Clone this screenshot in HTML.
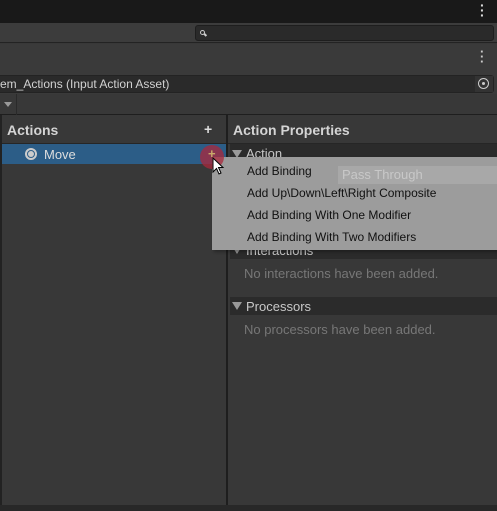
<!DOCTYPE html><html><head><style>
body{margin:0;width:497px;height:511px;background:#383838;font-family:"Liberation Sans",sans-serif;position:relative;overflow:hidden;color:#c4c4c4}
div{position:absolute;box-sizing:border-box}
.t{white-space:nowrap;font-size:12px}
.tri{width:0;height:0;border-left:5px solid transparent;border-right:5px solid transparent;border-top:8px solid #999}
</style></head><body>
<div style="left:0;top:0;width:497px;height:23px;background:#191919"></div>
<div class="t" style="left:480px;top:3px;color:#ddd;font-size:14px;font-weight:bold;line-height:5px;width:6px">·<br>·<br>·</div>
<div style="left:0;top:23px;width:497px;height:20px;background:#3c3c3c;border-bottom:1px solid #232323"></div>
<div style="left:195px;top:25px;width:299px;height:16px;background:#2a2a2a;border:1px solid #1e1e1e;border-radius:3px"></div>
<div style="left:200px;top:30px;width:5px;height:5px;border:1.5px solid #ccc;border-radius:50%"></div>
<div style="left:204px;top:34px;width:3px;height:1.5px;background:#ccc;transform:rotate(45deg)"></div>
<div style="left:0;top:44px;width:497px;height:50px;background:#3a3a3a"></div>
<div class="t" style="left:480px;top:49px;color:#ccc;font-size:13px;font-weight:bold;line-height:5px">·<br>·<br>·</div>
<div style="left:-4px;top:75px;width:498px;height:18px;background:#2a2a2a;border:1px solid #232323;border-radius:3px"></div>
<div class="t" style="left:0;top:77px;color:#d2d2d2">em_Actions (Input Action Asset)</div>
<div style="left:475px;top:76px;width:18px;height:16px;background:#333"></div>
<div style="left:478px;top:78px;width:11px;height:11px;border:1.5px solid #ccc;border-radius:50%"></div>
<div style="left:482px;top:82px;width:3px;height:3px;background:#ccc;border-radius:50%"></div>
<div style="left:0;top:94px;width:497px;height:21px;background:#383838;border-bottom:1px solid #1e1e1e"></div>
<div style="left:16px;top:94px;width:1px;height:21px;background:#2a2a2a"></div>
<div class="tri" style="left:4px;top:102px;border-left-width:4px;border-right-width:4px;border-top-width:5px"></div>
<div style="left:0;top:115px;width:2px;height:390px;background:#222"></div>
<div style="left:226px;top:115px;width:2px;height:390px;background:#1e1e1e"></div>
<div style="left:2px;top:115px;width:224px;height:29px;background:#383838;border-bottom:1px solid #262626"></div>
<div class="t" style="left:7px;top:122px;font-size:14px;font-weight:bold;color:#d4d4d4">Actions</div>
<div class="t" style="left:204px;top:121px;font-size:14px;font-weight:bold;color:#ddd">+</div>
<div style="left:228px;top:115px;width:269px;height:29px;border-bottom:1px solid #262626"></div>
<div class="t" style="left:233px;top:122px;font-size:14px;font-weight:bold;color:#d4d4d4">Action Properties</div>
<div style="left:2px;top:144px;width:224px;height:20px;background:#2c5d87"></div>
<div style="left:25px;top:148px;width:12px;height:12px;border:2px solid #ccc;border-radius:50%"></div>
<div style="left:28px;top:151px;width:6px;height:6px;background:#ccc;border-radius:50%"></div>
<div class="t" style="left:44px;top:147px;color:#ddd;font-size:13px">Move</div>
<div style="left:230px;top:144px;width:267px;height:19px;background:#2b2b2b"></div>
<div class="tri" style="left:232px;top:150px"></div>
<div class="t" style="left:246px;top:146px;font-size:13px;color:#c8c8c8">Action</div>
<div style="left:230px;top:241px;width:267px;height:18px;background:#2b2b2b"></div>
<div class="tri" style="left:232px;top:246px"></div>
<div class="t" style="left:246px;top:243px;font-size:13px;color:#c8c8c8">Interactions</div>
<div class="t" style="left:244px;top:266px;font-size:13px;color:#777">No interactions have been added.</div>
<div style="left:230px;top:297px;width:267px;height:18px;background:#2b2b2b"></div>
<div class="tri" style="left:232px;top:302px"></div>
<div class="t" style="left:246px;top:299px;font-size:13px;color:#c8c8c8">Processors</div>
<div class="t" style="left:244px;top:322px;font-size:13px;color:#777">No processors have been added.</div>
<div style="left:0;top:505px;width:497px;height:6px;background:#282828"></div>
<div style="left:212px;top:157px;width:285px;height:93px;background:#9c9c9c;box-shadow:2px 2px 3px rgba(0,0,0,.3)"></div>
<div style="left:338px;top:166px;width:159px;height:18px;background:#a8a8a8"></div>
<div class="t" style="left:342px;top:167px;font-size:13px;color:#c8c8c8">Pass Through</div>
<div class="t" style="left:247px;top:164px;color:#111">Add Binding</div>
<div class="t" style="left:247px;top:186px;color:#111">Add Up\Down\Left\Right Composite</div>
<div class="t" style="left:247px;top:208px;color:#111">Add Binding With One Modifier</div>
<div class="t" style="left:247px;top:230px;color:#111">Add Binding With Two Modifiers</div>
<div style="left:200px;top:145px;width:24px;height:24px;background:rgba(170,40,60,.75);border-radius:50%"></div>
<div class="t" style="left:208px;top:146px;font-size:13px;font-weight:bold;color:#c9a86a">+</div>
<svg style="position:absolute;left:212px;top:157px" width="14" height="20"><path d="M1 1 L1 15 L4.5 11.5 L7 17 L9 16 L6.5 10.5 L11 10.5 Z" fill="#fff" stroke="#000" stroke-width="1"/></svg>
</body></html>
